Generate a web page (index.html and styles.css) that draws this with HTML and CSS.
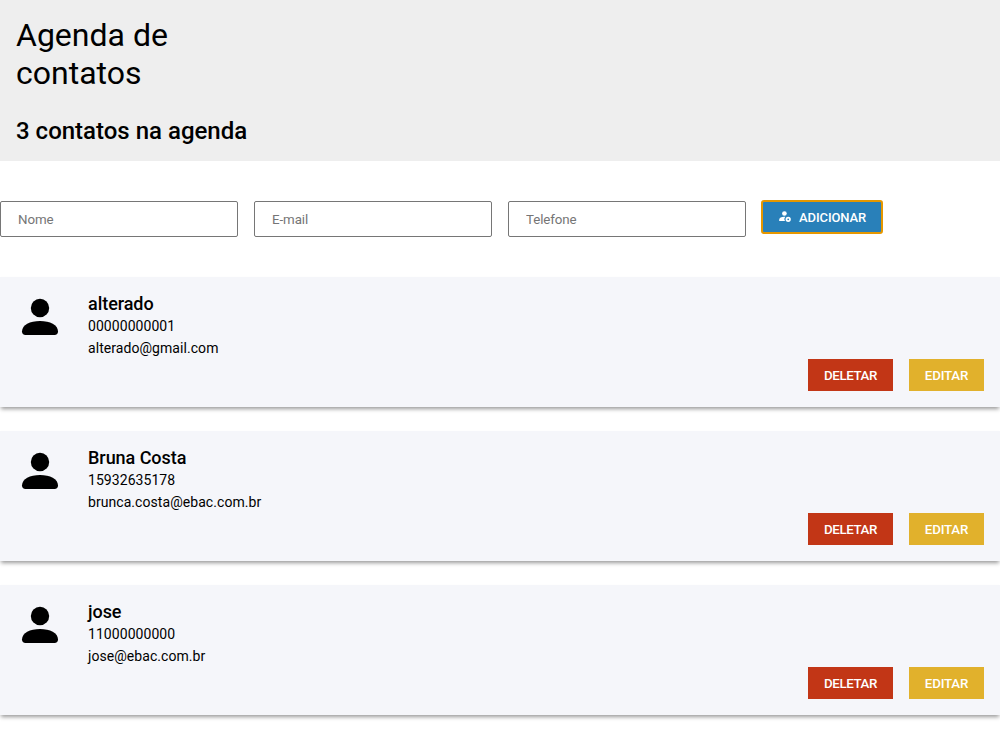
FILE: index.html
```html
<!DOCTYPE html>
<html lang="pt-BR">
<head>
<meta charset="utf-8">
<title>Agenda de contatos</title>
<link rel="stylesheet" href="styles.css">
</head>
<body>
<svg class="sprite" width="0" height="0">
  <symbol id="person" viewBox="0 0 24 24"><circle cx="12" cy="7.5" r="4.6"/><path d="M3 19.3C3 15.8 7 14 12 14s9 1.8 9 5.3c0 1.2-.7 1.7-1.7 1.7H4.7C3.700 21 3 20.500 3 19.300Z"/></symbol>
</svg>
<header class="header">
  <h1 class="title">Agenda de contatos</h1>
  <h2 class="count">3 contatos na agenda</h2>
</header>
<form class="form">
  <input class="field" type="text" placeholder="Nome">
  <input class="field" type="email" placeholder="E-mail">
  <input class="field" type="text" placeholder="Telefone">
  <button class="add" type="button">
    <svg class="add-icon" viewBox="0 0 24 24"><circle cx="11" cy="6" r="4"/><path d="M12.500 11.500C7 10.800 2 13 2 16.500V19h10A6 6 0 0 1 12.500 11.500Z"/><path fill-rule="evenodd" d="M17.500 11.500a4.500 4.500 0 1 0 0 9 4.500 4.500 0 0 0 0-9Zm0 3a1.500 1.500 0 1 1 0 3 1.500 1.500 0 0 1 0-3Z"/></svg>
    ADICIONAR
  </button>
</form>
<ul class="list">
  <li class="card">
    <svg class="avatar"><use href="#person"/></svg>
    <div class="info"><h3 class="name">alterado</h3><p>00000000001</p><p>alterado@gmail.com</p></div>
    <div class="actions"><button class="btn delete">DELETAR</button><button class="btn edit">EDITAR</button></div>
  </li>
  <li class="card">
    <svg class="avatar"><use href="#person"/></svg>
    <div class="info"><h3 class="name">Bruna Costa</h3><p>15932635178</p><p>brunca.costa@ebac.com.br</p></div>
    <div class="actions"><button class="btn delete">DELETAR</button><button class="btn edit">EDITAR</button></div>
  </li>
  <li class="card">
    <svg class="avatar"><use href="#person"/></svg>
    <div class="info"><h3 class="name">jose</h3><p>11000000000</p><p>jose@ebac.com.br</p></div>
    <div class="actions"><button class="btn delete">DELETAR</button><button class="btn edit">EDITAR</button></div>
  </li>
</ul>
</body>
</html>
```

FILE: styles.css
```css
* { box-sizing: border-box; margin: 0; padding: 0; font-family: Roboto, sans-serif; }
body { background: #fff; color: #000; }
.sprite { display: block; }
.header { height: 161px; padding: 16px; background: #eee; }
.title { width: 200px; font-size: 32px; font-weight: 400; line-height: 38px; }
.count { margin-top: 25px; font-size: 24px; font-weight: 500; line-height: 28px; }
.form { display: flex; gap: 16px; margin: 40px 0; height: 36px; }
.field { width: 238px; height: 36px; padding: 0 17px; border: 1px solid #767676; border-radius: 2px; font-size: 13.333px; letter-spacing: -.1px; }
.add { display: flex; align-items: center; width: 120px; height: 32px; padding: 0 15px 0 16px; border: 0; border-radius: 2px; outline: 2px solid #e59700; outline-offset: -1px; background: #2980b9; color: #fff; font-size: 13px; font-weight: 500; letter-spacing: -.1px; white-space: nowrap; }
.add-icon { width: 14px; height: 14px; margin-right: 7px; fill: #fff; flex: none; }
.list { list-style: none; }
.card { display: flex; height: 130px; margin-bottom: 24px; padding: 16px; background: #f5f6fa; box-shadow: 0 3px 4px -1px rgba(0,0,0,.4); }
.avatar { width: 48px; height: 48px; }
.info { margin-left: 24px; font-size: 14px; line-height: 22px; letter-spacing: .06px; }
.name { font-size: 18px; font-weight: 500; line-height: 22px; letter-spacing: -.05px; }
.actions { display: flex; gap: 16px; margin-left: auto; align-self: flex-end; }
.btn { height: 32px; border: 0; color: #fff; font-size: 13.333px; font-weight: 500; letter-spacing: -.4px; }
.delete { width: 85px; background: #c23616; }
.edit { width: 75px; background: #e1b12c; letter-spacing: -.2px; }
```
